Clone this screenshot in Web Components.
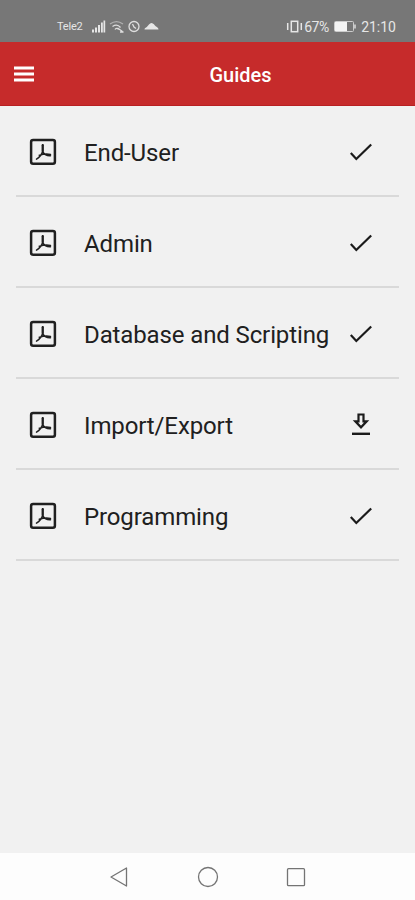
<!DOCTYPE html>
<html lang="en">
<head>
<meta charset="utf-8">
<title>Guides</title>
<style>
html,body{margin:0;height:100%}
body{font-family:Roboto,"Liberation Sans",sans-serif;background:#f1f1f1;overflow:hidden}
</style>
</head>
<body>
<guides-app></guides-app>
<script>
const define = (name, html) => customElements.define(name, class extends HTMLElement {
  constructor() {
    super();
    const t = document.createElement('template');
    t.innerHTML = html;
    this.attachShadow({mode: 'open'}).append(t.content.cloneNode(true));
  }
});

define('status-bar', `
<style>
:host{display:flex;box-sizing:border-box;height:42px;padding:11px 19px 0 57px;background:#777;color:#e6e6e6;align-items:center;justify-content:space-between;line-height:16px}
div{display:flex;align-items:center}
.carrier{font-size:11px;width:34px;letter-spacing:-.2px}
.num{font-size:14px;white-space:nowrap}
svg{display:block}
</style>
<div>
  <span class="carrier">Tele2</span>
  <svg width="70" height="16" viewBox="91 18.500 70 16">
    <g fill="#e6e6e6"><path d="M92 29h2v3h-2zM95 27h2v5h-2zM98 24.500h2v7.500h-2zM101 22h1.800v10h-1.800zM103.500 20h1.700v12h-1.700z"/><path d="M144.500 29c0-1.200 1.300-1.800 2.300-2.400 1.500-1.300 2.700-4 4.700-4 2 0 3 2.400 4.500 3.400 1.200.8 2.500 1.600 2.500 3z"/></g>
    <g fill="none" stroke="#dedede" stroke-width="1.300"><path d="M110 23.500c4-3 9-3 13 0" opacity=".55"/><path d="M112.500 26c3-2 6-1.500 8 1M115 29c1-2 3-1 3.500 0"/><path d="M117.500 27.500l5 3.500M120 31.500h3.500"/><circle cx="134" cy="26" r="5"/><path d="M132.500 23.500l1.500 3 2 1.500"/></g>
  </svg>
</div>
<div>
  <svg width="18" height="16" viewBox="0 0 18 16" fill="none" stroke="#e6e6e6" stroke-width="1.500"><rect x="5.300" y="2.300" width="6.400" height="10.400"/><path d="M1.700 4v7M15.300 4v7"/></svg>
  <span class="num" style="width:27px;letter-spacing:-.4px">67%</span>
  <svg width="30" height="16" viewBox="0 0 30 16"><rect x="3.500" y="2.500" width="19" height="10" rx="1" fill="none" stroke="#ccc"/><path d="M4 3h12v9H4z" fill="#f4f4f4"/><path d="M24 5.500v4" stroke="#ddd" stroke-width="1.500"/></svg>
  <span class="num">21:10</span>
</div>`);

define('app-header', `
<style>
:host{display:grid;grid-template-columns:66px 1fr;box-sizing:border-box;height:64px;background:#c62b2b;color:#fff;align-items:center;border-bottom:1px solid #b82022}
svg{display:block;margin-left:14px}
h1{margin:0;padding-top:2px;font-size:20px;line-height:24px;font-weight:500;text-align:center}
</style>
<svg width="20" height="16" viewBox="0 0 20 16" fill="#fff"><path d="M0 .5h20v3H0zM0 6.500h20v3H0zM0 12.500h20v3H0z"/></svg>
<h1><slot></slot></h1>`);

define('pdf-icon', `
<style>:host{display:block;width:28px;height:28px}svg{display:block}</style>
<svg width="28" height="28" viewBox="0 0 28 28" fill="none" stroke="#202020">
<rect x="2.100" y="1.900" width="23.800" height="23.800" rx="2" stroke-width="2.500"/>
<path d="M13.700 6.700v6.500c1 2.500 3.600 4.700 7.800 4.500M13.700 13.200c-.9 3-2.800 5.900-6.200 7.900M10.300 17.300c2.700-1 6.700-2 11.200-.9" stroke-width="1.500" stroke-linecap="round"/><path d="M13.700 7.200v5.800" stroke-width="2.200" stroke-linecap="round"/>
</svg>`);

define('check-icon', `
<style>:host,svg{display:block}</style>
<svg width="24" height="24" viewBox="0 0 24 24" fill="none" stroke="#1b1b1b" stroke-width="2.200"><path d="M1.800 13l5.500 6L22.200 4.500"/></svg>`);

define('download-icon', `
<style>:host,svg{display:block}</style>
<svg width="24" height="24" viewBox="0 0 24 24" fill="none" stroke="#1b1b1b" stroke-width="2.200"><path d="M9.500 1.500h5v6.800h3.200L12 14.300 6.300 8.300h3.200z"/><path d="M3 20.800h18" stroke-width="2.400"/></svg>`);

define('guide-row', `
<style>
:host{display:grid;grid-template-columns:55px 1fr 24px;box-sizing:border-box;height:91px;margin:0 16px;padding:2px 26px 0 13px;align-items:center;border-bottom:2px solid #d9d9d9;color:#202020}
.label{font-size:24px;line-height:32px;white-space:nowrap;letter-spacing:-.12px;padding-top:2px}
</style>
<pdf-icon></pdf-icon><span class="label"><slot></slot></span><slot name="status"></slot>`);

define('nav-bar', `
<style>
:host{display:flex;height:47px;background:#fdfdfd;align-items:center;justify-content:space-between;padding:0 107px 0 108px}
svg{display:block}
</style>
<svg width="24" height="24" viewBox="0 0 24 24" fill="none" stroke="#747474" stroke-width="1.300" stroke-linejoin="round"><path d="M18.500 3v18L3 12z"/></svg>
<svg width="24" height="24" viewBox="0 0 24 24" fill="none" stroke="#747474" stroke-width="1.300"><circle cx="12" cy="12" r="9.500"/></svg>
<svg width="24" height="24" viewBox="0 0 24 24" fill="none" stroke="#747474" stroke-width="1.300"><rect x="3.500" y="3.700" width="17" height="17" rx="1"/></svg>`);

define('guides-app', `
<style>
:host{display:flex;flex-direction:column;height:900px;background:#f1f1f1}
main{flex:1}
</style>
<status-bar></status-bar>
<app-header>Guides</app-header>
<main>
<guide-row>End-User<check-icon slot="status"></check-icon></guide-row>
<guide-row>Admin<check-icon slot="status"></check-icon></guide-row>
<guide-row>Database and Scripting<check-icon slot="status"></check-icon></guide-row>
<guide-row>Import/Export<download-icon slot="status"></download-icon></guide-row>
<guide-row>Programming<check-icon slot="status"></check-icon></guide-row>
</main>
<nav-bar></nav-bar>`);
</script>
</body>
</html>
